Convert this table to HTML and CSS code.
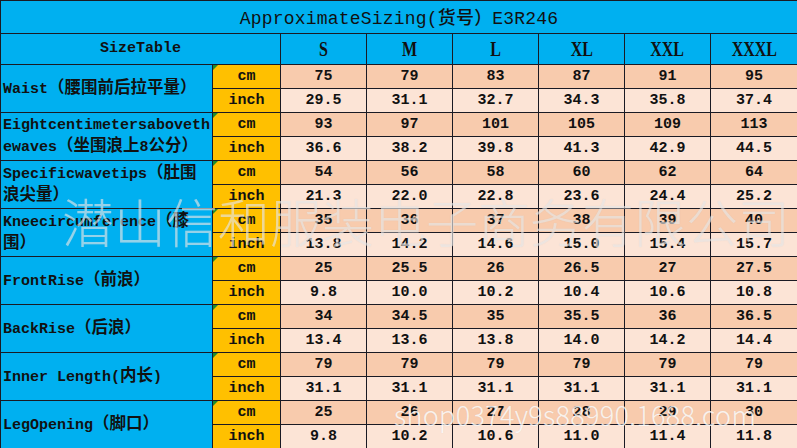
FILE: index.html
```html
<!DOCTYPE html>
<html lang="zh">
<head>
<meta charset="utf-8">
<title>ApproximateSizing E3R246</title>
<link rel="stylesheet" href="styles.css">
</head>
<body>
<div class="sheet">
<table class="size-table">
  <colgroup>
    <col class="c-label"><col class="c-unit">
    <col class="c-size"><col class="c-size"><col class="c-size"><col class="c-size"><col class="c-size"><col class="c-last">
  </colgroup>
  <tr class="r-title"><td colspan="8" class="title">ApproximateSizing(<span class="cjk">货号）</span>E3R246</td></tr>
  <tr class="r-head">
    <td colspan="2" class="head-label">SizeTable</td>
    <td class="size"><span>S</span></td><td class="size"><span>M</span></td><td class="size"><span>L</span></td>
    <td class="size"><span>XL</span></td><td class="size"><span>XXL</span></td><td class="size"><span>XXXL</span></td>
  </tr>

  <tr class="cm"><td rowspan="2" class="label"><div class="lbl">Waist<span class="cjk">（腰围前后拉平量）</span></div></td><td class="unit mark">cm</td>
    <td>75</td><td>79</td><td>83</td><td>87</td><td>91</td><td>95</td></tr>
  <tr class="inch"><td class="unit">inch</td>
    <td>29.5</td><td>31.1</td><td>32.7</td><td>34.3</td><td>35.8</td><td>37.4</td></tr>

  <tr class="cm"><td rowspan="2" class="label"><div class="lbl">Eightcentimetersabovethewaves<span class="cjk">（坐围浪上</span>8<span class="cjk">公分）</span></div></td><td class="unit mark">cm</td>
    <td>93</td><td>97</td><td>101</td><td>105</td><td>109</td><td>113</td></tr>
  <tr class="inch"><td class="unit">inch</td>
    <td>36.6</td><td>38.2</td><td>39.8</td><td>41.3</td><td>42.9</td><td>44.5</td></tr>

  <tr class="cm"><td rowspan="2" class="label"><div class="lbl">Specificwavetips<span class="cjk">（肚围浪尖量）</span></div></td><td class="unit mark">cm</td>
    <td>54</td><td>56</td><td>58</td><td>60</td><td>62</td><td>64</td></tr>
  <tr class="inch"><td class="unit">inch</td>
    <td>21.3</td><td>22.0</td><td>22.8</td><td>23.6</td><td>24.4</td><td>25.2</td></tr>

  <tr class="cm"><td rowspan="2" class="label"><div class="lbl">Kneecircumference<span class="cjk">（膝围）</span></div></td><td class="unit mark">cm</td>
    <td>35</td><td>36</td><td>37</td><td>38</td><td>39</td><td>40</td></tr>
  <tr class="inch"><td class="unit">inch</td>
    <td>13.8</td><td>14.2</td><td>14.6</td><td>15.0</td><td>15.4</td><td>15.7</td></tr>

  <tr class="cm"><td rowspan="2" class="label"><div class="lbl">FrontRise<span class="cjk">（前浪）</span></div></td><td class="unit mark">cm</td>
    <td>25</td><td>25.5</td><td>26</td><td>26.5</td><td>27</td><td>27.5</td></tr>
  <tr class="inch"><td class="unit">inch</td>
    <td>9.8</td><td>10.0</td><td>10.2</td><td>10.4</td><td>10.6</td><td>10.8</td></tr>

  <tr class="cm"><td rowspan="2" class="label"><div class="lbl">BackRise<span class="cjk">（后浪）</span></div></td><td class="unit mark">cm</td>
    <td>34</td><td>34.5</td><td>35</td><td>35.5</td><td>36</td><td>36.5</td></tr>
  <tr class="inch"><td class="unit">inch</td>
    <td>13.4</td><td>13.6</td><td>13.8</td><td>14.0</td><td>14.2</td><td>14.4</td></tr>

  <tr class="cm"><td rowspan="2" class="label"><div class="lbl">Inner Length(<span class="cjk">内长</span>)</div></td><td class="unit mark">cm</td>
    <td>79</td><td>79</td><td>79</td><td>79</td><td>79</td><td>79</td></tr>
  <tr class="inch"><td class="unit">inch</td>
    <td>31.1</td><td>31.1</td><td>31.1</td><td>31.1</td><td>31.1</td><td>31.1</td></tr>

  <tr class="cm"><td rowspan="2" class="label"><div class="lbl">LegOpening<span class="cjk">（脚口）</span></div></td><td class="unit mark">cm</td>
    <td>25</td><td>26</td><td>27</td><td>28</td><td>29</td><td>30</td></tr>
  <tr class="inch"><td class="unit">inch</td>
    <td>9.8</td><td>10.2</td><td>10.6</td><td>11.0</td><td>11.4</td><td>11.8</td></tr>
</table>
<div class="wm wm-company">潜山信和服装电子商务有限公司</div>
<div class="wm wm-shop">shop0374y9s88990.1688.com</div>
</div>
</body>
</html>
```
FILE: styles.css
```css
html, body {
  margin: 0;
  padding: 0;
  background: #ffffff;
}
.sheet {
  position: relative;
  width: 797px;
  height: 448px;
  overflow: hidden;
}
.size-table {
  width: 797px;
  table-layout: fixed;
  border-collapse: collapse;
  font-family: "Liberation Mono", "Noto Sans CJK SC", monospace;
  font-weight: bold;
  font-size: 15px;
  color: #111111;
}
.c-label { width: 212px; }
.c-unit { width: 68px; }
.c-size { width: 86px; }
.c-last { width: 87px; }
.size-table td {
  border: 1px solid #1a1a24;
  padding: 0;
  text-align: center;
  vertical-align: middle;
  line-height: 18px;
}
.r-title td { height: 32px; }
.r-head td { height: 30px; }
.cm td, .inch td { height: 23px; }
.cjk {
  font-family: "Noto Sans CJK SC", sans-serif;
  font-size: 16.5px;
}
.title {
  background: #00b0f0;
  font-size: 18px;
  font-weight: normal;
  letter-spacing: 0.2px;
  padding-left: 4px;
}
.title .cjk {
  font-size: 18px;
  font-weight: 500;
  line-height: 18px;
}
.head-label {
  background: #00b0f0;
  font-size: 15px;
}
.size {
  background: #00b0f0;
  font-family: "Liberation Serif", serif;
  font-weight: bold;
  font-size: 20px;
}
.size span {
  display: inline-block;
  transform: scaleX(0.8);
}
.label {
  background: #00b0f0;
  text-align: left !important;
  padding-left: 2px !important;
  font-size: 15px;
}
.lbl {
  line-height: 20px;
  word-break: break-all;
}
.lbl .cjk {
  font-weight: bold;
  line-height: 16px;
}
.unit {
  background: #ffc000;
  position: relative;
}
.mark::before {
  content: "";
  position: absolute;
  left: 0;
  top: 0;
  border-top: 5px solid #1e8c2e;
  border-right: 5px solid transparent;
}
.cm td { background: #f8cbad; }
.inch td { background: #fce4d6; }
.cm td.label { background: #00b0f0; }
.cm td.unit, .inch td.unit { background: #ffc000; }
.wm {
  position: absolute;
  white-space: nowrap;
  pointer-events: none;
  font-family: "Noto Sans CJK SC", "Noto Sans", sans-serif;
  font-weight: 300;
}
.wm-company {
  left: 62px;
  top: 186px;
  font-size: 52px;
  line-height: 70px;
  color: rgba(240, 240, 240, 0.55);
  text-shadow: 0 0 1px rgba(170, 170, 170, 0.25);
}
.wm-shop {
  left: 394px;
  top: 397px;
  font-size: 27px;
  line-height: 36px;
  letter-spacing: 0.3px;
  color: rgba(255, 255, 255, 0.8);
  text-shadow: 0 0 1px rgba(180, 180, 180, 0.3);
}
```
